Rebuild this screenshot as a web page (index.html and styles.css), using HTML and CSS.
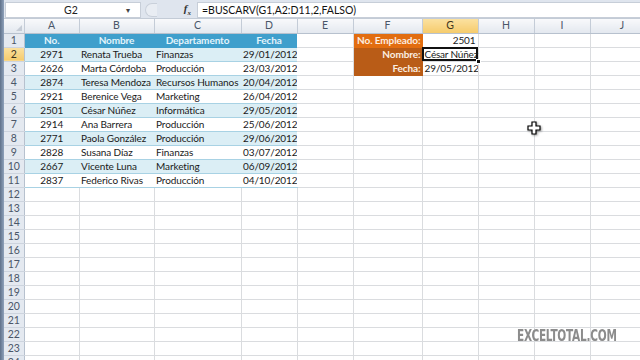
FILE: index.html
```html
<!DOCTYPE html>
<html lang="es">
<head>
  <meta charset="UTF-8" />
  <meta name="viewport" content="width=device-width, initial-scale=1.0" />
  <title>BUSCARV</title>
  <link rel="stylesheet" href="styles.css">
</head>
<body>

<div class="app">
  <div class="frame-left"></div>
  <div class="main">

    <div class="formula-bar">
      <div class="name-box">
        <span class="name-ref">G2</span>
        <span class="drop">&#9662;</span>
      </div>
      <div class="fx-area">
        <span class="grip"></span>
        <span class="fx">f<sub>x</sub></span>
      </div>
      <div class="formula">=BUSCARV(G1,A2:D11,2,FALSO)</div>
    </div>

    <table class="sheet">
      <colgroup>
        <col class="c-rh"><col class="c-a"><col class="c-b"><col class="c-c"><col class="c-d">
        <col class="c-e"><col class="c-f"><col class="c-g"><col class="c-h"><col class="c-i"><col class="c-j">
      </colgroup>
      <tr class="col-heads">
        <th class="corner"><span class="tri"></span></th>
        <th>A</th><th>B</th><th>C</th><th>D</th><th>E</th><th>F</th>
        <th class="sel">G</th><th>H</th><th>I</th><th>J</th>
      </tr>
      <tr>
        <th class="rh">1</th>
        <td class="t-head">No.</td><td class="t-head">Nombre</td><td class="t-head">Departamento</td><td class="t-head">Fecha</td>
        <td></td><td class="lbl lbl-main">No. Empleado:</td><td class="num">2501</td><td></td><td></td><td></td>
      </tr>
      <tr class="band">
        <th class="rh sel">2</th>
        <td class="t ctr">2971</td><td class="t">Renata Trueba</td><td class="t">Finanzas</td><td class="t num">29/01/2012</td>
        <td></td><td class="lbl">Nombre:</td><td class="active"><span class="active-text">César Núñez</span><span class="handle"></span></td><td></td><td></td><td></td>
      </tr>
      <tr>
        <th class="rh">3</th>
        <td class="t ctr">2626</td><td class="t">Marta Córdoba</td><td class="t">Producción</td><td class="t num">23/03/2012</td>
        <td></td><td class="lbl">Fecha:</td><td class="num">29/05/2012</td><td></td><td></td><td></td>
      </tr>
      <tr class="band">
        <th class="rh">4</th>
        <td class="t ctr">2874</td><td class="t">Teresa Mendoza</td><td class="t">Recursos Humanos</td><td class="t num">20/04/2012</td>
        <td></td><td></td><td></td><td></td><td></td><td></td>
      </tr>
      <tr>
        <th class="rh">5</th>
        <td class="t ctr">2921</td><td class="t">Berenice Vega</td><td class="t">Marketing</td><td class="t num">26/04/2012</td>
        <td></td><td></td><td></td><td></td><td></td><td></td>
      </tr>
      <tr class="band">
        <th class="rh">6</th>
        <td class="t ctr">2501</td><td class="t">César Núñez</td><td class="t">Informática</td><td class="t num">29/05/2012</td>
        <td></td><td></td><td></td><td></td><td></td><td></td>
      </tr>
      <tr>
        <th class="rh">7</th>
        <td class="t ctr">2914</td><td class="t">Ana Barrera</td><td class="t">Producción</td><td class="t num">25/06/2012</td>
        <td></td><td></td><td></td><td></td><td></td><td></td>
      </tr>
      <tr class="band">
        <th class="rh">8</th>
        <td class="t ctr">2771</td><td class="t">Paola González</td><td class="t">Producción</td><td class="t num">29/06/2012</td>
        <td></td><td></td><td></td><td></td><td></td><td></td>
      </tr>
      <tr>
        <th class="rh">9</th>
        <td class="t ctr">2828</td><td class="t">Susana Díaz</td><td class="t">Finanzas</td><td class="t num">03/07/2012</td>
        <td></td><td></td><td></td><td></td><td></td><td></td>
      </tr>
      <tr class="band">
        <th class="rh">10</th>
        <td class="t ctr">2667</td><td class="t">Vicente Luna</td><td class="t">Marketing</td><td class="t num">06/09/2012</td>
        <td></td><td></td><td></td><td></td><td></td><td></td>
      </tr>
      <tr>
        <th class="rh">11</th>
        <td class="t ctr">2837</td><td class="t">Federico Rivas</td><td class="t">Producción</td><td class="t num">04/10/2012</td>
        <td></td><td></td><td></td><td></td><td></td><td></td>
      </tr>
      <tr><th class="rh">12</th><td></td><td></td><td></td><td></td><td></td><td></td><td></td><td></td><td></td><td></td></tr>
      <tr><th class="rh">13</th><td></td><td></td><td></td><td></td><td></td><td></td><td></td><td></td><td></td><td></td></tr>
      <tr><th class="rh">14</th><td></td><td></td><td></td><td></td><td></td><td></td><td></td><td></td><td></td><td></td></tr>
      <tr><th class="rh">15</th><td></td><td></td><td></td><td></td><td></td><td></td><td></td><td></td><td></td><td></td></tr>
      <tr><th class="rh">16</th><td></td><td></td><td></td><td></td><td></td><td></td><td></td><td></td><td></td><td></td></tr>
      <tr><th class="rh">17</th><td></td><td></td><td></td><td></td><td></td><td></td><td></td><td></td><td></td><td></td></tr>
      <tr><th class="rh">18</th><td></td><td></td><td></td><td></td><td></td><td></td><td></td><td></td><td></td><td></td></tr>
      <tr><th class="rh">19</th><td></td><td></td><td></td><td></td><td></td><td></td><td></td><td></td><td></td><td></td></tr>
      <tr><th class="rh">20</th><td></td><td></td><td></td><td></td><td></td><td></td><td></td><td></td><td></td><td></td></tr>
      <tr><th class="rh">21</th><td></td><td></td><td></td><td></td><td></td><td></td><td></td><td></td><td></td><td></td></tr>
      <tr><th class="rh">22</th><td></td><td></td><td></td><td></td><td></td><td></td><td></td><td></td><td></td><td></td></tr>
      <tr><th class="rh">23</th><td></td><td></td><td></td><td></td><td></td><td></td><td></td><td></td><td></td><td></td></tr>
      <tr><th class="rh">24</th><td></td><td></td><td></td><td></td><td></td><td></td><td></td><td></td><td></td><td></td></tr>
    </table>
  </div>
</div>

<!-- mouse cursor -->
<svg class="cursor" width="14" height="14" viewBox="0 0 14 14">
  <path d="M5 1h4v4h4v4h-4v4h-4v-4h-4v-4h4z" fill="#fff" stroke="#000" stroke-width="1.2"/>
</svg>

<div class="watermark">EXCELTOTAL.COM</div>

</body>
</html>
```

FILE: styles.css
```css
* {
  box-sizing: border-box;
}

body {
  margin: 0;
  width: 640px;
  height: 360px;
  overflow: hidden;
  background: #fff;
  font-family: Lato, "Liberation Sans", sans-serif;
  font-size: 10px;
  color: #1a1a1a;
  position: relative;
}

.app {
  display: flex;
  height: 360px;
}

.frame-left {
  width: 4px;
  flex: none;
  background: linear-gradient(to right, #5f718a, #8fa2bb);
}

.main {
  flex: 1;
  min-width: 0;
  display: flex;
  flex-direction: column;
}

/* formula bar */
.formula-bar {
  height: 19px;
  flex: none;
  display: flex;
  align-items: center;
  background: #dfe5ee;
  border-bottom: 1px solid #c3cbd6;
  padding-top: 1px;
  font-size: 10.5px;
}

.name-box {
  width: 136px;
  height: 16px;
  margin-left: 1px;
  background: #fff;
  border: 1px solid #c7ced8;
  display: flex;
  align-items: center;
  color: #222;
}

.name-ref {
  flex: 1;
  text-align: center;
  padding-left: 10px;
}

.drop {
  width: 14px;
  font-size: 8px;
  color: #444;
}

.fx-area {
  width: 56px;
  height: 16px;
  display: flex;
  align-items: center;
  justify-content: space-between;
  padding: 0 6px 0 4px;
}

.grip {
  width: 12px;
  height: 14px;
  border: 1px solid #c9d0da;
  border-radius: 7px 0 0 7px;
  border-right: none;
  background: #e9edf3;
}

.fx {
  font-family: "Liberation Serif", serif;
  font-style: italic;
  font-weight: bold;
  font-size: 11px;
  color: #333;
}

.fx sub {
  font-size: 7px;
}

.formula {
  flex: 1;
  height: 16px;
  background: #fff;
  border: 1px solid #c7ced8;
  border-right: none;
  padding-left: 4px;
  line-height: 14px;
  color: #111;
}

/* sheet grid */
.sheet {
  border-collapse: collapse;
  table-layout: fixed;
  width: 650px;
}

.c-rh { width: 20px; }
.c-a { width: 55px; }
.c-b { width: 75px; }
.c-c { width: 87px; }
.c-d { width: 56px; }
.c-e { width: 56px; }
.c-f { width: 69px; }
.c-g { width: 56px; }
.c-h { width: 56px; }
.c-i { width: 56px; }
.c-j { width: 64px; }

.sheet tr {
  height: 14px;
}

.sheet td {
  height: 14px;
  padding: 0 2px;
  border-right: 1px solid #dadcdf;
  border-bottom: 1px solid #dadcdf;
  white-space: nowrap;
  overflow: hidden;
  line-height: 13px;
  letter-spacing: -0.1px;
}

.col-heads th {
  height: 14px;
  font-weight: normal;
  font-size: 10.5px;
  color: #4a5668;
  background: linear-gradient(#f8f9fb, #e3e8ef);
  border-right: 1px solid #c4ccd7;
  border-bottom: 1px solid #b7c1ce;
  line-height: 13px;
  padding: 0;
}

.col-heads th.sel,
.rh.sel {
  background: linear-gradient(#fbe1a0, #f5cb6c);
  color: #3d3520;
}

.corner {
  position: relative;
}

.tri {
  position: absolute;
  right: 2px;
  bottom: 2px;
  width: 0;
  height: 0;
  border-left: 6px solid transparent;
  border-bottom: 6px solid #c5ccd6;
}

.rh {
  font-weight: normal;
  font-size: 10.5px;
  color: #4a5668;
  background: #e4e9f0;
  border-right: 1px solid #b7c1ce;
  border-bottom: 1px solid #cdd4de;
  text-align: center;
  padding: 0;
  line-height: 13px;
}

/* the data table */
.sheet td.t-head {
  background: #3f9fcc;
  color: #e3f4fb;
  font-weight: bold;
  text-align: center;
  border-right: none;
  border-bottom: 1px solid #3f9fcc;
}

.sheet td.t {
  border-right: none;
  border-bottom: 1px solid #a8d2e4;
}

.band td.t {
  background: #dbeef5;
}

.ctr {
  text-align: center;
}

.num {
  text-align: right;
}

.sheet td.lbl {
  background: #b95c17;
  color: #fbeee2;
  font-weight: bold;
  text-align: right;
  padding-right: 1px;
  border-color: #b95c17;
}

.sheet td.lbl-main {
  background: #e26d10;
  border-color: #e26d10;
}

.sheet td.active {
  position: relative;
  overflow: visible;
  padding-left: 2px;
  outline: 2px solid #111;
  outline-offset: -2px;
}

.active-text {
  position: relative;
  z-index: 1;
  letter-spacing: -0.2px;
}

.handle {
  position: absolute;
  right: -3px;
  bottom: -3px;
  width: 5px;
  height: 5px;
  background: #111;
  border: 1px solid #fff;
  z-index: 2;
}

.cursor {
  position: absolute;
  left: 527px;
  top: 121px;
  filter: drop-shadow(1px 1px 1px rgba(0,0,0,0.4));
}

.watermark {
  position: absolute;
  left: 517px;
  top: 327px;
  font-family: "DejaVu Sans Condensed", "DejaVu Sans", sans-serif;
  font-weight: bold;
  font-size: 15px;
  letter-spacing: -0.3px;
  color: #8c8c8c;
  transform: scaleX(0.78);
  transform-origin: left top;
}
```
